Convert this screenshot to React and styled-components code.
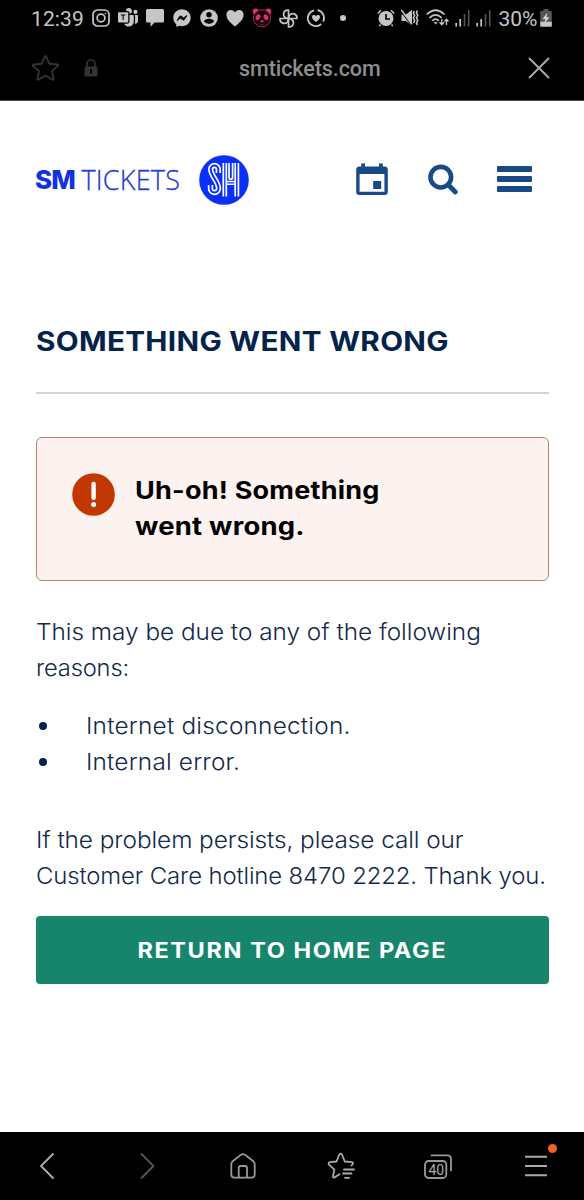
import styled, { createGlobalStyle } from 'styled-components';
import { BsMicrosoftTeams } from 'react-icons/bs';
import { FaFacebookMessenger } from 'react-icons/fa';

const App = () =>
{
    return(
        <Page>
            <GlobalStyle/>
            <StatusBar>
                <Clock>12:39</Clock>
                <Notifications>
                    <InstagramIcon/>
                    <BsMicrosoftTeams size={20}/>
                    <ChatIcon/>
                    <FaFacebookMessenger size={18}/>
                    <PersonIcon/>
                    <HeartIcon/>
                    <PandaIcon/>
                    <PinwheelIcon/>
                    <HealthIcon/>
                    <Dot/>
                </Notifications>
                <System>
                    <AlarmIcon/>
                    <MuteIcon/>
                    <WifiIcon/>
                    <SignalIcon/>
                    <SignalIcon/>
                    <Percent>30%</Percent>
                    <BatteryIcon/>
                </System>
            </StatusBar>
            <AddressBar>
                <StarIcon/>
                <LockIcon/>
                <Address>smtickets.com</Address>
                <CloseIcon/>
            </AddressBar>
            <Site>
                <Header>
                    <Brand>
                        <b>SM</b>
                        <span>TICKETS</span>
                    </Brand>
                    <BrandMark/>
                    <HeaderActions>
                        <CalendarIcon/>
                        <SearchIcon/>
                        <Burger>
                            <i/>
                            <i/>
                            <i/>
                        </Burger>
                    </HeaderActions>
                </Header>
                <Heading>
                    <Line $stretch={1.12} $spacing={0.28}>SOMETHING WENT WRONG</Line>
                </Heading>
                <Alert>
                    <AlertIcon/>
                    <AlertText>
                        <Line $stretch={1.11} $spacing={0.22}>Uh-oh! Something</Line>
                        <Line $stretch={1.13} $spacing={0.2}>went wrong.</Line>
                    </AlertText>
                </Alert>
                <Paragraph>
                    <Line $stretch={1.06} $spacing={-0.03}>This may be due to any of the following</Line>
                    <Line $stretch={1.03} $spacing={-0.15}>reasons:</Line>
                </Paragraph>
                <Reasons>
                    <li><Line $stretch={1.06} $spacing={0.2}>Internet disconnection.</Line></li>
                    <li><Line $stretch={1.06} $spacing={0.17}>Internal error.</Line></li>
                </Reasons>
                <Paragraph>
                    <Line $stretch={1.06} $spacing={-0.08}>If the problem persists, please call our</Line>
                    <Line $stretch={1.04} $spacing={-0.13}>Customer Care hotline 8470 2222. Thank you.</Line>
                </Paragraph>
                <HomeButton>
                    <Line $center $stretch={1.12} $spacing={1.42}>RETURN TO HOME PAGE</Line>
                </HomeButton>
            </Site>
            <BottomBar>
                <BackIcon/>
                <ForwardIcon/>
                <HomeIcon/>
                <BookmarksIcon/>
                <Tabs>
                    <TabsIcon/>
                    <span>40</span>
                </Tabs>
                <Menu>
                    <MenuIcon/>
                    <Badge/>
                </Menu>
            </BottomBar>
        </Page>
    )
}

const InstagramIcon = () => (
    <svg width="18" height="18" viewBox="0 0 18 18" fill="none" stroke="currentColor" strokeWidth="1.7">
        <rect x="1" y="1" width="16" height="16" rx="4.5"/>
        <circle cx="9" cy="9" r="3.9"/>
        <circle cx="13.4" cy="4.6" r="0.5" strokeWidth="1"/>
    </svg>
)
const ChatIcon = () => (
    <svg width="18" height="18" viewBox="0 0 18 18" fill="currentColor">
        <path d="M1.5 0h15Q18 0 18 1.5v10.5Q18 13.5 16.5 13.5H8.5L4.5 17.8V13.5h-3Q0 13.5 0 12V1.5Q0 0 1.5 0Z"/>
    </svg>
)
const PersonIcon = () => (
    <svg width="18" height="18" viewBox="0 0 18 18">
        <circle cx="9" cy="9" r="8.8" fill="currentColor"/>
        <circle cx="9" cy="5.8" r="2.7" fill="#000"/>
        <path d="M3.8 12.3Q5 9.8 9 9.8T14.2 12.3Q12.3 15 9 15T3.8 12.3Z" fill="#000"/>
    </svg>
)
const HeartIcon = () => (
    <svg width="18" height="18" viewBox="0 0 18 18" fill="currentColor">
        <path d="M9 17.5C5 14 .4 10.5.4 5.7.4 2.8 2.5 1 4.8 1 6.7 1 8.2 2 9 3.5 9.8 2 11.3 1 13.2 1c2.3 0 4.4 1.8 4.4 4.7C17.6 10.5 13 14 9 17.5Z"/>
    </svg>
)
const PandaIcon = () => (
    <svg width="20" height="20" viewBox="0 0 20 20" fill="#d93567">
        <circle cx="3.6" cy="3.5" r="2.9"/>
        <circle cx="16.4" cy="3.5" r="2.9"/>
        <circle cx="10" cy="10.3" r="8.6" fill="#16040a" stroke="#a82a50" strokeWidth="1"/>
        <ellipse cx="6" cy="9.2" rx="2.2" ry="3.1" transform="rotate(30 6 9.2)"/>
        <ellipse cx="14" cy="9.2" rx="2.2" ry="3.1" transform="rotate(-30 14 9.2)"/>
        <ellipse cx="10" cy="13.3" rx="1.8" ry="1.1"/>
        <path d="M7.5 15.8Q10 17.4 12.5 15.8" fill="none" stroke="#a82a50" strokeWidth=".7"/>
    </svg>
)
const PinwheelIcon = () => (
    <svg width="19" height="19" viewBox="0 0 20 20" fill="none" stroke="currentColor" strokeWidth="1.8">
        <path d="M10 10V1.2A4.4 4.4 0 0 0 7 9.3Q8 10 10 10Z"/>
        <path d="M10 10h8.8A4.4 4.4 0 0 0 10.7 7Q10 8 10 10Z"/>
        <path d="M10 10v8.8A4.4 4.4 0 0 0 13 10.7Q12 10 10 10Z"/>
        <path d="M10 10H1.2A4.4 4.4 0 0 0 9.3 13Q10 12 10 10Z"/>
    </svg>
)
const HealthIcon = () => (
    <svg width="18" height="18" viewBox="0 0 18 18">
        <path d="M7 1.3A8 8 0 1 0 14.2 15M16.2 12.5A8 8 0 0 0 10.5 1.2" fill="none" stroke="currentColor" strokeWidth="1.8"/>
        <path d="M9 13C6.5 11 5 9.8 5 8 5 5.8 8 5.4 9 7.3 10 5.4 13 5.8 13 8 13 9.8 11.5 11 9 13Z" fill="currentColor"/>
    </svg>
)
const AlarmIcon = () => (
    <svg width="18" height="18" viewBox="0 0 18 18">
        <path d="M.8 4.5 4 1.2M17.2 4.5 14 1.2M3.5 15.5 2.2 17M14.5 15.5 15.8 17" stroke="currentColor" strokeWidth="1.6"/>
        <circle cx="9" cy="9.4" r="7.5" fill="currentColor"/>
        <path d="M9 5v5h4" fill="none" stroke="#000" strokeWidth="1.6"/>
    </svg>
)
const MuteIcon = () => (
    <svg width="18" height="18" viewBox="0 0 18 18">
        <path d="M.5 5.5H5L11 .8v16L5 12H.5Z" fill="currentColor"/>
        <path d="M-.5 2 11.5 17.5" stroke="#000" strokeWidth="1.1"/>
        <path d="M.3 1 11 15" stroke="currentColor" strokeWidth="1.5"/>
        <path d="M13.2 2 12.4 4l1.2 2.5-1.2 2.5 1.2 2.5-1 2.5M16.3 1.5 15.5 4l1.2 2.5-1.2 2.5 1.2 2.5-1.2 2.5.8 2" fill="none" stroke="currentColor" strokeWidth="1.6"/>
    </svg>
)
const WifiIcon = () => (
    <svg width="24" height="18" viewBox="0 0 24 18" fill="none" stroke="currentColor" strokeWidth="1.7">
        <path d="M.7 5.5Q9.5 -3 18.5 5.5M3.5 8.8Q9.5 2.8 15.7 8.8M6.3 11.8Q9.5 8.6 12.8 11.8"/>
        <path d="M8 13.3h3.2L9.6 15.3Z" fill="currentColor" strokeWidth=".5"/>
        <path d="M15.8 10v5.5M13.6 13.3l2.2 2.5 2.2-2.5M20.5 16v-5.5M18.5 12.5l2-2.3 2 2.3" strokeWidth="1.3"/>
    </svg>
)
const SignalIcon = () => (
    <svg width="15" height="18" viewBox="0 0 15 18">
        <path d="M1.2 17.5v-3.5M5.2 17.5v-7.5" stroke="currentColor" strokeWidth="1.7"/>
        <path d="M9.5 17.5V5M13.7 17.5V1" stroke="#555" strokeWidth="1.6"/>
    </svg>
)
const BatteryIcon = () => (
    <svg width="12" height="18" viewBox="0 0 12 18">
        <path d="M3.5 0h5v2H11q.8 0 .8.8V13H.2V2.8Q.2 2 1 2h2.5Z" fill="#555"/>
        <path d="M.2 12.8h11.6V17q0 .8-.8.8H1Q.2 17.8.2 17Z" fill="currentColor"/>
        <path d="M7.5 3.5 2.5 10h2.8l-1 4.5L9.5 8.3H6.5Z" fill="#d5d5d5"/>
    </svg>
)
const StarIcon = () => (
    <svg width="28" height="28" viewBox="0 0 28 28" fill="none" stroke="#333" strokeWidth="1.9" strokeLinejoin="round">
        <path d="M12.8 2.8Q13.5 1.2 14.2 2.8L17.3 9.7 25.4 10.5Q26.7 10.9 25.9 11.9L20 17 21.6 24.8Q21.7 26.3 20.5 25.6L13.5 21.5 6.5 25.6Q5.3 26.3 5.4 24.8L7 17 1.1 11.9Q.3 10.9 1.6 10.5L9.7 9.7Z"/>
    </svg>
)
const LockIcon = () => (
    <svg width="14" height="18" viewBox="0 0 14 18">
        <path d="M3 8V5Q3 1 7 1T11 5V8" fill="none" stroke="#333" strokeWidth="1.6"/>
        <rect x=".5" y="7.5" width="13" height="10" rx="1.2" fill="#333"/>
        <path d="M7 10v4.5" stroke="#000" strokeWidth="2"/>
    </svg>
)
const CloseIcon = () => (
    <svg width="22" height="22" viewBox="0 0 22 22" fill="none" stroke="#aaa" strokeWidth="1.9">
        <path d="M1 1 21 21M21 1 1 21"/>
    </svg>
)
const BrandMark = () => (
    <svg width="50" height="50" viewBox="0 0 50 50" fill="none">
        <circle cx="25" cy="25" r="24.8" fill="#0a2ffa"/>
        <path d="M19.3 18V14.3A3.8 3.8 0 0 0 11.7 14.3C11.7 21 19.5 26 19.5 33.5A4 4 0 0 1 11.5 33.5V30" stroke="#fff" strokeWidth="5.4"/>
        <path d="M19.3 18.500V14.3A3.8 3.8 0 0 0 11.7 14.3C11.7 21 19.5 26 19.5 33.5A4 4 0 0 1 11.5 33.5V29.500" stroke="#0a2ffa" strokeWidth="2"/>
        <g stroke="#fff" strokeWidth="1.7">
            <path d="M24.300 8V41.500M27.300 8V41.500M36.200 8V41.500M39.400 8V41.500"/>
            <path d="M30 8V22Q30 24.300 31.800 24.300T33.600 22V8"/>
            <path d="M27.300 29.200H36.200M27.300 26.500H36.200" strokeWidth="1.400"/>
        </g>
    </svg>
)
const CalendarIcon = () => (
    <svg width="32" height="33" viewBox="0 0 32 33">
        <path d="M5.2 .5H9V3.500H23V.5H26.800V3.500H28.500Q31.800 3.500 31.800 6.800V28.800Q31.800 32 28.500 32H3.500Q.2 32 .2 28.800V6.800Q.2 3.500 3.500 3.500H5.200ZM3.600 11V28.700H28.400V11Z" fill="#174a87" fillRule="evenodd"/>
        <rect x="17.2" y="18" width="8" height="8" fill="#174a87"/>
    </svg>
)
const SearchIcon = () => (
    <svg width="30" height="31" viewBox="0 0 30 31" fill="none" stroke="#174a87">
        <circle cx="12.8" cy="13.2" r="10.3" strokeWidth="4.6"/>
        <path d="M20.5 21 27.3 28" strokeWidth="4.8" strokeLinecap="round"/>
    </svg>
)
const AlertIcon = () => (
    <svg width="43" height="43" viewBox="0 0 43 43">
        <circle cx="21.5" cy="21.5" r="21.3" fill="#c23802"/>
        <path d="M21.6 11V24.8" stroke="#fff" strokeWidth="4.4" strokeLinecap="round"/>
        <circle cx="21.6" cy="31.6" r="2.5" fill="#fff"/>
    </svg>
)
const BackIcon = () => (
    <svg width="20" height="28" viewBox="0 0 20 28" fill="none" stroke="#aaa" strokeWidth="1.9" strokeLinejoin="round">
        <path d="M14.5 1.5 2 14 14.5 26.5"/>
    </svg>
)
const ForwardIcon = () => (
    <svg width="20" height="28" viewBox="0 0 20 28" fill="none" stroke="#555" strokeWidth="1.9" strokeLinejoin="round">
        <path d="M5 1.5 17.5 14 5 26.5"/>
    </svg>
)
const HomeIcon = () => (
    <svg width="26" height="26" viewBox="0 0 26 26" fill="none" stroke="#999" strokeWidth="1.8" strokeLinejoin="round">
        <path d="M10.8 1.9 2.7 8.3Q1.3 9.5 1.3 11.2V21.5Q1.3 24.7 4.5 24.7H21.5Q24.7 24.7 24.7 21.5V11.2Q24.7 9.5 23.3 8.3L15.2 1.9Q13 .2 10.8 1.9Z"/>
        <path d="M8.7 24.7V15Q8.7 13 10.7 13H15Q17 13 17 15V24.7"/>
    </svg>
)
const BookmarksIcon = () => (
    <svg width="28" height="28" viewBox="0 0 28 28" fill="none" stroke="#aaa" strokeWidth="1.8" strokeLinejoin="round" strokeLinecap="round">
        <path d="M12.5 22.2 7.7 25.3Q5.7 26 6 24L7.4 17.7 2 12.7Q.8 10.5 3 10.2L9.5 9.5 12.3 2.5Q13.6.8 14.9 2.5L17.8 9.5 25 10.2Q26.8 10.8 25.5 12.3L24.5 13.3"/>
        <path d="M17 17.5H27M16 21.5H24.5M18 25.8H22"/>
    </svg>
)
const TabsIcon = () => (
    <svg width="28" height="25" viewBox="0 0 28 25" fill="none" stroke="#999" strokeWidth="1.8" strokeLinecap="round">
        <rect x="1" y="7" width="21.3" height="17" rx="3.5"/>
        <path d="M7.5 1.4H23.5Q27 1.4 27 5V16.5"/>
    </svg>
)
const MenuIcon = () => (
    <svg width="22" height="22" viewBox="0 0 22 22" stroke="#aaa" strokeWidth="1.9">
        <path d="M0 1.7H22M0 11H22M0 20.2H22"/>
    </svg>
)

const GlobalStyle = createGlobalStyle`
    body
    {
        margin:0;
        background-color:#fff;
    }
    svg
    {
        display:block;
        flex:none;
    }
`
const Page = styled.div`
    width:584px;
    height:1200px;
    display:flex;
    flex-direction:column;
    overflow:hidden;
    font-family:Inter, sans-serif;
    color:#12294b;
`
const StatusBar = styled.div`
    height:36px;
    display:flex;
    align-items:center;
    box-sizing:border-box;
    padding-left:31px;
    background-color:#000;
    color:#c6c6c6;
    font-family:Roboto, sans-serif;
`
const Clock = styled.div`
    width:57px;
    font-size:21px;
    letter-spacing:0.1px;
    line-height:36px;
    padding-top:1px;
    box-sizing:border-box;
`
const Notifications = styled.div`
    display:grid;
    grid-template-columns:repeat(10, 26.8px);
    justify-items:center;
    align-items:center;
`
const Dot = styled.i`
    width:6px;
    height:6px;
    border-radius:50%;
    background-color:currentColor;
`
const System = styled.div`
    display:grid;
    grid-template-columns:24px 25px 29px 21px 22px 42px 12px;
    align-items:center;
    margin-left:21.5px;
`
const Percent = styled.span`
    font-size:21px;
    line-height:36px;
    padding-top:1px;
`
const AddressBar = styled.div`
    height:65px;
    display:grid;
    grid-template-columns:52px 156px 288px 22px;
    align-items:center;
    box-sizing:border-box;
    padding:0 0 0 32px;
    background-color:#000;
    border-bottom:1px solid #4a4a4a;
`
const Address = styled.div`
    font-family:Roboto, sans-serif;
    font-size:21.5px;
    font-weight:500;
    letter-spacing:-0.07px;
    color:#8e8e8e;
    margin-left:-1px;
`
const Site = styled.main`
    height:1031px;
    box-sizing:border-box;
    padding:47px 35px 0 35.5px;
    background-color:#fff;
`
const Header = styled.header`
    display:flex;
    align-items:center;
    height:63px;
    color:#174a87;
`
const Brand = styled.div`
    display:flex;
    width:163px;
    font-family:"Open Sans", sans-serif;
    font-size:27px;
    line-height:36px;
    color:#2440cc;

    b
    {
        width:46.5px;
        margin-left:-0.5px;
        font-family:Inter, sans-serif;
        font-size:26px;
        font-weight:800;
        letter-spacing:-1px;
        color:#1232e0;
    }
    span
    {
        font-weight:300;
        letter-spacing:0.2px;
        -webkit-text-stroke:0.3px #2440cc;
    }
`
const HeaderActions = styled.div`
    display:grid;
    grid-template-columns:72px 68.5px 35px;
    align-items:center;
    margin-left:107.5px;
`
const Burger = styled.div`
    display:flex;
    flex-direction:column;
    gap:4.3px;
    margin-top:-1px;

    i
    {
        height:5.7px;
        border-radius:1px;
        background-color:currentColor;
    }
`
const Heading = styled.h1`
    height:183px;
    margin:0 0 43px;
    padding-top:112px;
    box-sizing:border-box;
    border-bottom:2px solid #d3d3d3;
    font-size:26.5px;
    font-weight:700;
    line-height:36px;
    color:#03234b;
`
const Line = styled.span`
    display:block;
    width:max-content;
    white-space:nowrap;
    letter-spacing:${(props) => props.$spacing}px;
    transform:scaleX(${(props) => props.$stretch});
    transform-origin:${(props) => (props.$center ? 'center' : 'left')};
`
const Alert = styled.div`
    display:flex;
    gap:20px;
    height:144px;
    box-sizing:border-box;
    padding:35px 0 0 35px;
    margin-bottom:33px;
    border:1px solid #b98268;
    border-radius:6px;
    background-color:#fcf3f0;
`
const AlertText = styled.div`
    margin-top:-1px;
    font-size:24.3px;
    font-weight:700;
    line-height:36px;
    color:#000;
`
const Paragraph = styled.p`
    margin:0;
    font-size:23px;
    font-weight:300;
    line-height:36px;
`
const Reasons = styled.ul`
    list-style:none;
    margin:22px 0 42px;
    padding:0;
    font-size:23px;
    font-weight:300;
    line-height:36px;

    li
    {
        display:flex;
        align-items:center;
    }
    li::before
    {
        content:'';
        width:8px;
        height:8px;
        margin:0 39px 0 3px;
        border-radius:50%;
        background-color:#03234b;
    }
`
const HomeButton = styled.button`
    display:flex;
    align-items:center;
    justify-content:center;
    width:100%;
    height:68px;
    margin-top:22px;
    padding:0;
    border:0;
    border-radius:4px;
    background-color:#16856b;
    color:#fff;
    font-family:inherit;
    font-size:21px;
    font-weight:700;
`
const BottomBar = styled.nav`
    height:68px;
    display:grid;
    grid-template-columns:repeat(6, 97.4px);
    justify-items:center;
    align-items:center;
    box-sizing:border-box;
    background-color:#000;
`
const Tabs = styled.div`
    position:relative;

    span
    {
        position:absolute;
        left:1px;
        top:7px;
        width:22px;
        text-align:center;
        font-family:Roboto, sans-serif;
        font-size:14px;
        line-height:18px;
        color:#aaa;
    }
`
const Menu = styled.div`
    position:relative;
`
const Badge = styled.i`
    position:absolute;
    left:23px;
    top:-11px;
    width:9px;
    height:9px;
    border-radius:50%;
    background-color:#f0642a;
`
export default App;
